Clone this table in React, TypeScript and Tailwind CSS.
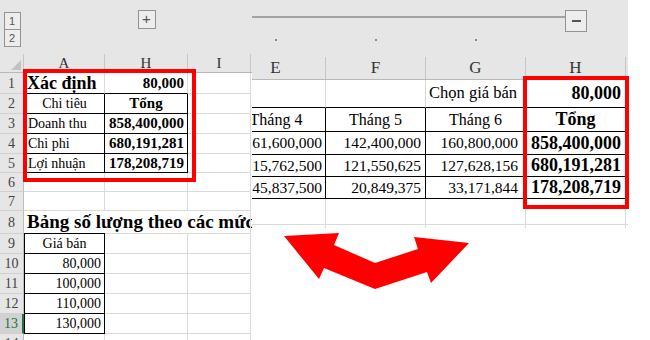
import React from 'react';

const serif = "font-['Liberation_Serif',serif]";

type CellProps = {
  w: string;
  br?: boolean;
  bb?: boolean;
  bl?: boolean;
  nr?: boolean;
  className?: string;
  children?: React.ReactNode;
};

// one spreadsheet cell; black borders where the sheet has them, light grid otherwise
const Cell: React.FC<CellProps> = ({ w, br, bb, bl, nr, className = '', children }) => (
  <div
    className={`${w} h-full shrink-0 flex items-center px-[3px] whitespace-nowrap border-b ${
      nr ? '' : 'border-r'
    } ${br ? 'border-r-black' : 'border-r-[#dadada]'} ${bb ? 'border-b-black' : 'border-b-[#dadada]'} ${
      bl ? 'border-l border-l-black' : ''
    } ${className}`}
  >
    {children}
  </div>
);

const OutlineBtn: React.FC<{ className?: string; children?: React.ReactNode }> = ({ className = '', children }) => (
  <div
    className={`flex items-center justify-center border border-[#939393] bg-[#ededed] text-[11px] text-[#555] font-['Liberation_Sans',sans-serif] ${className}`}
  >
    {children}
  </div>
);

const RowHead: React.FC<{ n: number; active?: boolean }> = ({ n, active }) => (
  <div
    className={`w-[24px] h-full shrink-0 flex items-center justify-center text-[14px] border-b border-b-[#d0d0d0] ${
      active
        ? 'bg-[#d2d2d2] text-[#217346] border-r-2 border-r-[#217346]'
        : 'bg-[#e6e6e6] text-[#444] border-r border-r-[#bdbdbd]'
    }`}
  >
    {n}
  </div>
);

const LRow: React.FC<{ n: number; h: string; active?: boolean; children?: React.ReactNode }> = ({
  n,
  h,
  active,
  children,
}) => (
  <div className={`${h} shrink-0 flex`}>
    <RowHead n={n} active={active} />
    {children}
  </div>
);

const LeftSheet = () => (
  <div className={`w-[252px] h-[340px] shrink-0 flex flex-col overflow-hidden bg-white ${serif} text-black`}>
    {/* outline bar */}
    <div className="h-[54px] shrink-0 bg-[#e6e6e6] flex">
      <div className="w-[24px] flex flex-col items-center pt-[12px]">
        <OutlineBtn className="w-[17px] h-[18px]">1</OutlineBtn>
        <OutlineBtn className="w-[17px] h-[18px] -mt-px">2</OutlineBtn>
      </div>
      <div className="w-[81px]" />
      <div className="w-[83px] flex justify-center pt-[10px]">
        <OutlineBtn className="w-[18px] h-[19px] text-[15px]">+</OutlineBtn>
      </div>
    </div>

    {/* column headers */}
    <div className="h-[19px] shrink-0 flex bg-[#e6e6e6] border-b border-[#b8b8b8] text-[15px] text-[#333]">
      <div className="w-[24px] border-r border-[#c6c6c6] flex items-end justify-end pr-[2px] pb-[2px]">
        <svg width="10" height="10" viewBox="0 0 10 10">
          <polygon points="10,0 10,10 0,10" fill="#c2c2c2" />
        </svg>
      </div>
      <div className="w-[81px] border-r border-[#c6c6c6] flex items-center justify-center">A</div>
      <div className="w-[83px] border-r border-[#c6c6c6] flex items-center justify-center">H</div>
      <div className="w-[63px] border-r border-[#c6c6c6] flex items-center justify-center">I</div>
    </div>

    <LRow n={1} h="h-[21px]">
      <Cell w="w-[81px]" bb className="text-[18px] font-bold">Xác định</Cell>
      <Cell w="w-[83px]" bb className="justify-end text-[15px] font-bold">80,000</Cell>
      <Cell w="w-[63px]" />
    </LRow>
    <LRow n={2} h="h-[20px]">
      <Cell w="w-[81px]" bl br bb className="justify-center text-[14px]">Chi tiêu</Cell>
      <Cell w="w-[83px]" br bb className="justify-center text-[15px] font-bold">Tổng</Cell>
      <Cell w="w-[63px]" />
    </LRow>
    <LRow n={3} h="h-[20px]">
      <Cell w="w-[81px]" bl br bb className="text-[14px]">Doanh thu</Cell>
      <Cell w="w-[83px]" br bb className="justify-end text-[15px] font-bold">858,400,000</Cell>
      <Cell w="w-[63px]" />
    </LRow>
    <LRow n={4} h="h-[20px]">
      <Cell w="w-[81px]" bl br bb className="text-[14px]">Chi phi</Cell>
      <Cell w="w-[83px]" br bb className="justify-end text-[15px] font-bold">680,191,281</Cell>
      <Cell w="w-[63px]" />
    </LRow>
    <LRow n={5} h="h-[19px]">
      <Cell w="w-[81px]" bl br bb className="text-[14px]">Lợi nhuận</Cell>
      <Cell w="w-[83px]" br bb className="justify-end text-[15px] font-bold">178,208,719</Cell>
      <Cell w="w-[63px]" />
    </LRow>
    <LRow n={6} h="h-[19px]">
      <Cell w="w-[81px]" />
      <Cell w="w-[83px]" />
      <Cell w="w-[63px]" />
    </LRow>
    <LRow n={7} h="h-[19px]">
      <Cell w="w-[81px]" />
      <Cell w="w-[83px]" />
      <Cell w="w-[63px]" />
    </LRow>
    <LRow n={8} h="h-[23px]">
      <Cell w="w-[81px]" nr bb className="text-[19px] font-bold">
        Bảng số lượng theo các mức
      </Cell>
      <Cell w="w-[83px]" nr />
      <Cell w="w-[63px]" />
    </LRow>
    <LRow n={9} h="h-[20px]">
      <Cell w="w-[81px]" bl br bb className="justify-center text-[14px]">Giá bán</Cell>
      <Cell w="w-[83px]" />
      <Cell w="w-[63px]" />
    </LRow>
    {['80,000', '100,000', '110,000', '130,000'].map((v, i) => (
      <LRow key={v} n={10 + i} h="h-[20px]" active={i === 3}>
        <Cell w="w-[81px]" bl br bb className="justify-end text-[14px]">{v}</Cell>
        <Cell w="w-[83px]" />
        <Cell w="w-[63px]" />
      </LRow>
    ))}
    <LRow n={14} h="h-[20px]">
      <Cell w="w-[81px]" />
      <Cell w="w-[83px]" />
      <Cell w="w-[63px]" />
    </LRow>
  </div>
);

const months = [
  ['161,600,000', '142,400,000', '160,800,000', '858,400,000'],
  ['115,762,500', '121,550,625', '127,628,156', '680,191,281'],
  ['45,837,500', '20,849,375', '33,171,844', '178,208,719'],
];
const rowH = ['h-[23px]', 'h-[22px]', 'h-[22px]'];

const RightSheet = () => (
  <div className={`w-[376px] h-[228px] shrink-0 overflow-hidden bg-white ${serif} text-black`}>
    {/* sheet is scrolled so column E is partly hidden */}
    <div className="ml-[-26px] w-[402px] flex flex-col">
      {/* outline bar */}
      <div className="h-[57px] shrink-0 bg-[#e6e6e6] flex">
        {[0, 1, 2].map((i) => (
          <div key={i} className="w-[100px] flex flex-col items-center">
            <div className={`w-full h-[2px] mt-[16px] bg-[#a3a3a3] ${i === 0 ? 'ml-[52px]' : ''}`} />
            <div className="w-[2px] h-[2px] bg-[#8a8a8a] mt-[21px]" />
          </div>
        ))}
        <div className="w-[100px] flex items-start pt-[10px]">
          <div className="w-[39px] h-[2px] mt-[6px] bg-[#a3a3a3]" />
          <OutlineBtn className="w-[22px] h-[22px]">
            <div className="w-[9px] h-[2px] bg-[#555]" />
          </OutlineBtn>
        </div>
      </div>

      {/* column headers */}
      <div className="h-[23px] shrink-0 flex bg-[#e6e6e6] border-b border-[#b8b8b8] text-[17px] text-[#333]">
        {['E', 'F', 'G', 'H'].map((c) => (
          <div key={c} className="w-[100px] border-r border-[#c6c6c6] flex items-center justify-center">
            {c}
          </div>
        ))}
        <div className="w-[2px]" />
      </div>

      <div className="h-[28px] flex">
        <Cell w="w-[100px]" bb />
        <Cell w="w-[100px]" bb />
        <Cell w="w-[100px]" bb className="text-[16.5px]">Chọn giá bán</Cell>
        <Cell w="w-[100px]" bb className="justify-end pr-[4px] text-[18px] font-bold">80,000</Cell>
        <Cell w="w-[2px]" />
      </div>
      <div className="h-[24px] flex">
        <Cell w="w-[100px]" bl br bb className="justify-center text-[16px]">Tháng 4</Cell>
        <Cell w="w-[100px]" br bb className="justify-center text-[16px]">Tháng 5</Cell>
        <Cell w="w-[100px]" br bb className="justify-center text-[16px]">Tháng 6</Cell>
        <Cell w="w-[100px]" br bb className="justify-center text-[18px] font-bold">Tổng</Cell>
        <Cell w="w-[2px]" />
      </div>
      {months.map((r, ri) => (
        <div key={ri} className={`${rowH[ri]} flex`}>
          <Cell w="w-[100px]" bl br bb className="justify-end text-[15.5px]">{r[0]}</Cell>
          <Cell w="w-[100px]" br bb className="justify-end pr-[4px] text-[15.5px]">{r[1]}</Cell>
          <Cell w="w-[100px]" br bb className="justify-end pr-[7px] text-[15.5px]">{r[2]}</Cell>
          <Cell w="w-[100px]" br bb className="justify-end pr-[4px] text-[18px] font-bold">{r[3]}</Cell>
          <Cell w="w-[2px]" />
        </div>
      ))}
      <div className="h-[26px] flex">
        <Cell w="w-[100px]" />
        <Cell w="w-[100px]" />
        <Cell w="w-[100px]" />
        <Cell w="w-[100px]" />
        <Cell w="w-[2px]" />
      </div>
      <div className="h-[10px] flex">
        <Cell w="w-[100px]" />
        <Cell w="w-[100px]" />
        <Cell w="w-[100px]" />
        <Cell w="w-[100px]" />
      </div>
    </div>
  </div>
);

const App: React.FC = () => {
  return (
    <div className="relative w-[650px] h-[340px] bg-white overflow-hidden flex items-start">
      <LeftSheet />
      <RightSheet />

      {/* red highlight frames */}
      <div className="absolute left-[23px] top-[69px] w-[173px] h-[113px] border-4 border-[#ff0000]" />
      <div className="absolute left-[523px] top-[76px] w-[106px] h-[133px] border-4 border-[#ff0000]" />

      {/* double arrow */}
      <svg className="absolute left-0 top-0 pointer-events-none" width="650" height="340" viewBox="0 0 650 340">
        <polygon
          points="284,236 339,233 334,245 375,263 418,249 414,237 469,243 431,283 427,272 375,289 324,268 319,279"
          fill="#ff0000"
        />
      </svg>
    </div>
  );
};

export default App;
